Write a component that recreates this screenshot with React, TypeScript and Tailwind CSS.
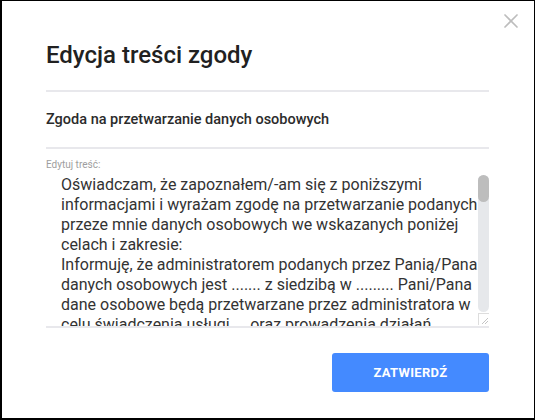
import React from "react";

const BODY =
  "Oświadczam, że zapoznałem/-am się z poniższymi informacjami i wyrażam zgodę na przetwarzanie podanych przeze mnie danych osobowych we wskazanych poniżej celach i zakresie:\nInformuję, że administratorem podanych przez Panią/Pana danych osobowych jest ....... z siedzibą w ......... Pani/Pana dane osobowe będą przetwarzane przez administratora w celu świadczenia usługi ... oraz prowadzenia działań marketingowych.";

export default function App() {
  return (
    <div
      className="relative w-[535px] h-[420px] bg-white border-t border-r border-l-2 border-b-2 border-black overflow-hidden"
      style={{ fontFamily: "Roboto, 'Liberation Sans', sans-serif" }}
    >
      <button className="absolute left-[501px] top-[12px] w-[16px] h-[16px] p-0" aria-label="close">
        <svg width="16" height="16" viewBox="0 0 16 16">
          <path d="M2 2 L14 14 M14 2 L2 14" stroke="#bdbdbd" strokeWidth="1.7" strokeLinecap="round" />
        </svg>
      </button>
      <div className="flex flex-col pl-[44px] pr-[45px] pt-[40px]">
        <h1 className="text-[24px] leading-[28px] font-medium text-[#212121]">Edycja treści zgody</h1>
        <div className="mt-[21px] h-[2px] bg-[#e8e8ec]" />
        <h2 className="mt-[18px] text-[14.5px] leading-[20px] font-medium text-[#2b2b2b]">
          Zgoda na przetwarzanie danych osobowych
        </h2>
        <div className="mt-[17px] h-[2px] bg-[#e8e8ec]" />
        <label className="mt-[10px] text-[10px] leading-[12px] text-[#9e9e9e]">Edytuj treść:</label>
        <div className="mt-[4px] flex h-[153px] border-b-2 border-[#e8e8ec]">
          <textarea
            className="flex-1 min-w-0 resize-none overflow-hidden pl-[15px] pr-0 pt-0 text-[16px] leading-[20px] text-[#333333] outline-none bg-white"
            style={{ fontFamily: "Roboto, 'Liberation Sans', sans-serif" }}
            defaultValue={BODY}
          />
          <div className="flex w-[11px] shrink-0 flex-col">
            <div className="h-[137px] rounded-full bg-[#e6e8eb]">
              <div className="h-[27px] rounded-full bg-[#bdbdbd]" />
            </div>
            <div className="mt-[1px] h-[12px] border-l border-t border-[#dddddd] flex items-end justify-end">
              <svg width="10" height="10" viewBox="0 0 10 10">
                <path d="M9 3 L3 9 M9 6 L6 9" stroke="#b5b5b5" strokeWidth="0.8" />
              </svg>
            </div>
          </div>
        </div>
        <div className="mt-[25px] flex justify-end">
          <button className="w-[157px] h-[39px] rounded-[3px] bg-[#448aff] text-white text-[13px] font-bold tracking-[0.3px]">
            ZATWIERDŹ
          </button>
        </div>
      </div>
    </div>
  );
}
